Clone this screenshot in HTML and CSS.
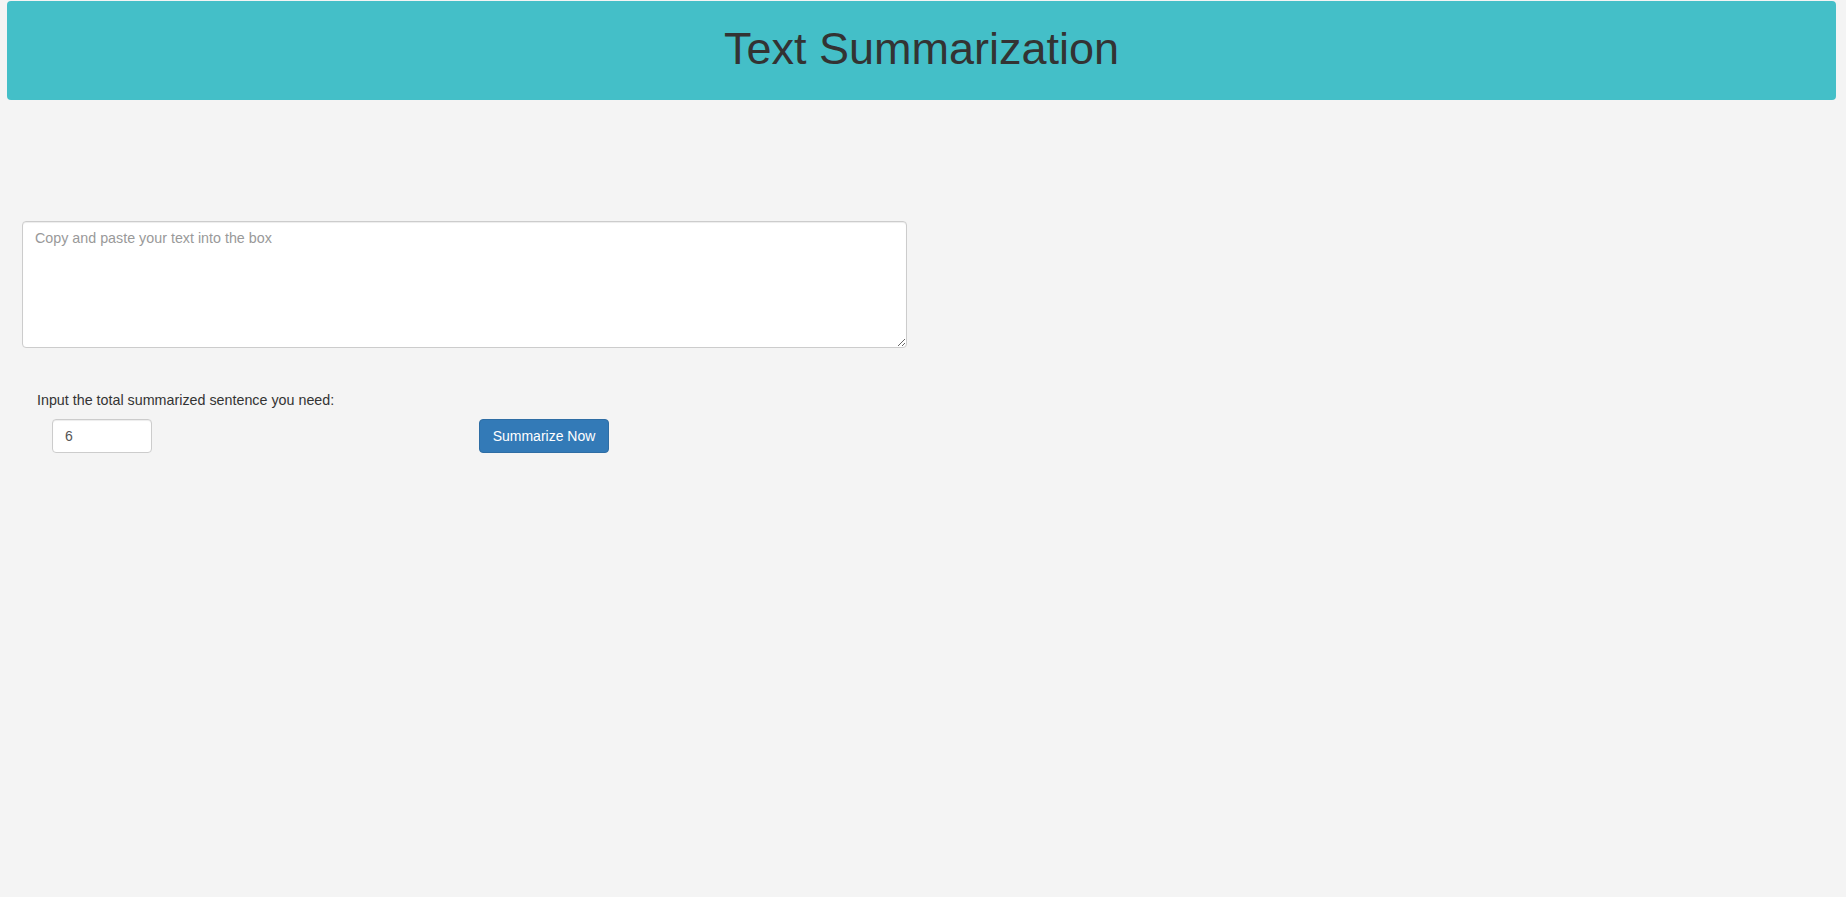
FILE: index.html
```html
<!DOCTYPE html>
<html>
<head>
<meta charset="utf-8">
<link rel="stylesheet" href="styles.css">
</head>
<body>
<header class="banner"><h1 class="title">Text Summarization</h1></header>
<main class="content">
  <textarea class="text-box" placeholder="Copy and paste your text into the box"></textarea>
  <div class="controls">
    <label class="count-label">Input the total summarized sentence you need:</label>
    <div class="control-row">
      <input class="count-input" type="number" value="6">
      <button class="btn-primary">Summarize Now</button>
    </div>
  </div>
</main>
</body>
</html>
```
FILE: styles.css
```css
html, body {
  margin: 0;
  padding: 0;
  background: #f4f4f4;
  font-family: "Liberation Sans", Arial, sans-serif;
  font-size: 14px;
  color: #333;
}
.banner {
  margin: 1px 10px 0 7px;
  height: 99px;
  background: #44bfc8;
  border-radius: 4px;
  display: flex;
  align-items: center;
  justify-content: center;
}
.title {
  margin: 0;
  font-weight: normal;
  font-size: 45px;
  color: #333;
  line-height: 1;
  padding-bottom: 4px;
}
.content {
  padding: 121px 0 0 22px;
}
.text-box {
  display: block;
  box-sizing: border-box;
  width: 885px;
  height: 127px;
  margin: 0;
  padding: 6px 12px;
  border: 1px solid #ccc;
  border-radius: 4px;
  background: #fff;
  font-family: "Liberation Sans", Arial, sans-serif;
  font-size: 14.3px;
  line-height: 20px;
  color: #555;
  box-shadow: inset 0 1px 1px rgba(0,0,0,0.075);
}
.text-box::placeholder {
  color: #999;
}
.controls {
  padding: 42px 0 0 15px;
}
.count-label {
  display: block;
  font-size: 14.3px;
  line-height: 20px;
  color: #333;
}
.control-row {
  display: flex;
  align-items: center;
  margin-top: 9px;
  padding-left: 15px;
}
.count-input {
  box-sizing: border-box;
  width: 100px;
  height: 34px;
  margin: 0;
  padding: 6px 12px;
  border: 1px solid #ccc;
  border-radius: 4px;
  background: #fff;
  font-family: "Liberation Sans", Arial, sans-serif;
  font-size: 14px;
  color: #555;
  box-shadow: inset 0 1px 1px rgba(0,0,0,0.075);
  -moz-appearance: textfield;
}
.count-input::-webkit-inner-spin-button,
.count-input::-webkit-outer-spin-button {
  -webkit-appearance: none;
  margin: 0;
}
.btn-primary {
  box-sizing: border-box;
  width: 130px;
  height: 34px;
  margin-left: 327px;
  padding: 6px 12px;
  border: 1px solid #2e6da4;
  border-radius: 4px;
  background: #337ab7;
  color: #fff;
  font-family: "Liberation Sans", Arial, sans-serif;
  font-size: 14px;
  line-height: 20px;
}
```
